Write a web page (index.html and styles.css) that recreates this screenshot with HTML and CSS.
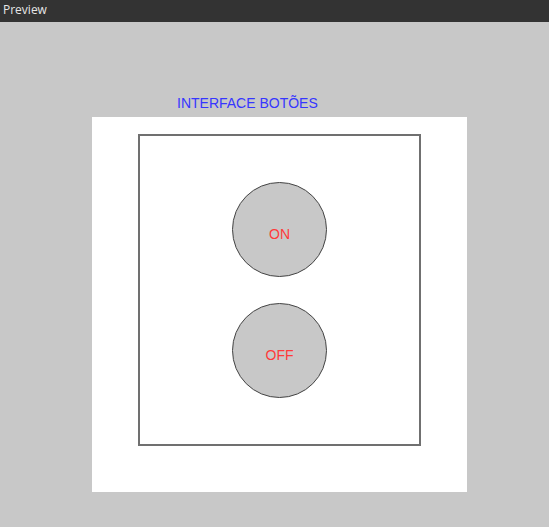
FILE: index.html
```html
<!DOCTYPE html>
<html lang="pt">
<head>
<meta charset="utf-8">
<title>Preview</title>
<link rel="stylesheet" href="styles.css">
</head>
<body>
<header class="titlebar">Preview</header>
<main class="stage">
  <h1 class="heading">INTERFACE BOTÕES</h1>
  <div class="canvas">
    <div class="frame">
      <button class="btn">ON</button>
      <button class="btn">OFF</button>
    </div>
  </div>
</main>
</body>
</html>
```
FILE: styles.css
```css
html, body {
  margin: 0;
  padding: 0;
}
body {
  background: #c8c8c8;
  width: 549px;
  height: 527px;
  overflow: hidden;
  font-family: "Liberation Sans", Arial, sans-serif;
}
.titlebar {
  height: 22px;
  background: #333333;
  color: #e6e6e6;
  font-family: "Open Sans", sans-serif;
  font-size: 12px;
  line-height: 20px;
  padding-left: 3px;
  box-sizing: border-box;
}
.stage {
  padding-top: 73px;
  padding-left: 92px;
}
.heading {
  margin: 0 0 6px 85px;
  font-size: 14px;
  line-height: 16px;
  font-weight: normal;
  color: #3636ff;
}
.canvas {
  width: 375px;
  height: 375px;
  background: #ffffff;
  padding: 17px 0 0 46px;
  box-sizing: border-box;
}
.frame {
  width: 283px;
  height: 312px;
  box-sizing: border-box;
  border: 2px solid #707070;
  display: flex;
  flex-direction: column;
  align-items: center;
  padding-top: 46px;
  gap: 26px;
}
.btn {
  width: 95px;
  height: 95px;
  box-sizing: border-box;
  border-radius: 50%;
  border: 1.5px solid #444444;
  background: #c8c8c8;
  color: #ff3a3a;
  font-family: "Liberation Sans", Arial, sans-serif;
  font-size: 14px;
  line-height: 16px;
  padding: 43px 0 0 0;
  margin: 0;
  display: flex;
  justify-content: center;
  align-items: flex-start;
}
```
